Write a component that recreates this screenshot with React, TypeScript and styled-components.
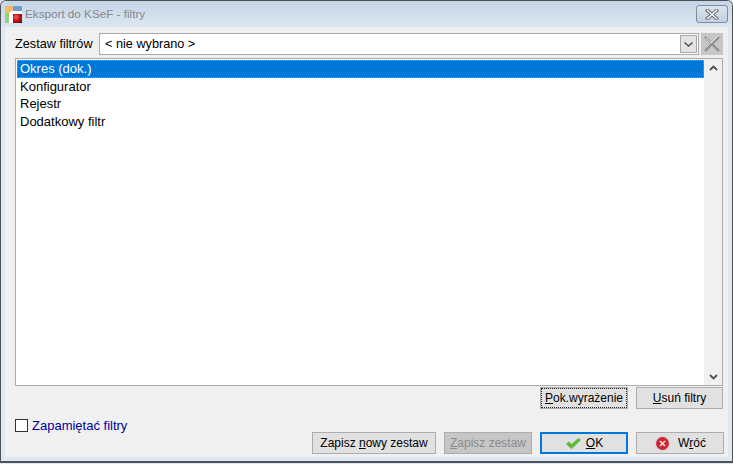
import * as React from "react"
import styled, { createGlobalStyle } from 'styled-components';

const GlobalStyle = createGlobalStyle`
  html, body {
    margin: 0;
    padding: 0;
    width: 733px;
    height: 464px;
    overflow: hidden;
    background: #dfe9f3;
  }
  * {
    box-sizing: border-box;
  }
`;

const items = ["Okres (dok.)", "Konfigurator", "Rejestr", "Dodatkowy filtr"];

const App = () => (
  <Dialog>
    <GlobalStyle />
    <TitleBar>
      <AppIcon width="17" height="17" viewBox="0 0 17 17">
        <defs>
          <radialGradient id="redSquare" cx="0.35" cy="0.35" r="0.8">
            <stop offset="0" stopColor="#f0605a" />
            <stop offset="0.5" stopColor="#c8141a" />
            <stop offset="1" stopColor="#5a0a0c" />
          </radialGradient>
        </defs>
        <rect x="0" y="0" width="8" height="7" fill="#f5b968" />
        <rect x="8" y="0" width="9" height="5" fill="#6a9fd2" />
        <rect x="0" y="7" width="4" height="10" fill="#9ad07c" />
        <path d="M4 17 V9 Q4 5 8 5 H17 V17 Z" fill="#fff" />
        <rect x="8" y="8" width="9" height="9" fill="url(#redSquare)" />
      </AppIcon>
      <WindowTitle>Eksport do KSeF - filtry</WindowTitle>
      <CloseButton>
        <svg width="14" height="11" viewBox="0 0 14 11">
          <path d="M2.5 1.5 L11.5 9.5 M11.5 1.5 L2.5 9.5" stroke="#59626e" strokeWidth="3.4" strokeLinecap="square" />
          <path d="M2.5 1.5 L11.5 9.5 M11.5 1.5 L2.5 9.5" stroke="#f4f6f8" strokeWidth="1.6" strokeLinecap="square" />
        </svg>
      </CloseButton>
    </TitleBar>
    <Body>
      <FilterRow>
        <FilterLabel>Zestaw filtrów</FilterLabel>
        <Combo>
          <ComboText>&lt; nie wybrano &gt;</ComboText>
          <ComboArrow>
            <svg width="11" height="7" viewBox="0 0 11 7">
              <path d="M1.5 1.5 L5.5 5 L9.5 1.5" fill="none" stroke="#4a5058" strokeWidth="1.4" />
            </svg>
          </ComboArrow>
        </Combo>
        <ClearButton>
          <svg width="20" height="20" viewBox="0 0 20 20">
            <path d="M3 3 L17 17 M17 3 L3 17" stroke="#8f8f8f" strokeWidth="2.4" />
            <path d="M9 9 L16 2 M4 4 L9 9" stroke="#efefef" strokeWidth="1" />
          </svg>
        </ClearButton>
      </FilterRow>
      <ListBox>
        <ListRows>
          {items.map((item, i) => (
            <ListRow key={item} $selected={i === 0}>{item}</ListRow>
          ))}
        </ListRows>
        <ScrollBar>
          <ScrollArrow>
            <svg width="9" height="6" viewBox="0 0 9 6">
              <path d="M1 5 L4.5 1.5 L8 5" fill="none" stroke="#505050" strokeWidth="1.8" />
            </svg>
          </ScrollArrow>
          <ScrollArrow>
            <svg width="9" height="6" viewBox="0 0 9 6">
              <path d="M1 1 L4.5 4.5 L8 1" fill="none" stroke="#505050" strokeWidth="1.8" />
            </svg>
          </ScrollArrow>
        </ScrollBar>
      </ListBox>
      <ListActions>
        <Button $width={88} $dotted><span><u>P</u>ok.wyrażenie</span></Button>
        <Button $width={87}><span><u>U</u>suń filtry</span></Button>
      </ListActions>
      <Footer>
        <Remember>
          <CheckBox />
          <RememberLabel>Zapamiętać filtry</RememberLabel>
        </Remember>
        <FooterButtons>
          <Button $width={124}><span>Zapisz <u>n</u>owy zestaw</span></Button>
          <Button $width={88} $disabled><span><u>Z</u>apisz zestaw</span></Button>
          <Button $width={88} $primary $gap={4}>
            <svg width="17" height="13" viewBox="0 0 17 13">
              <path d="M1 7 L4 4.5 L6.5 7 L13.5 1 L16 3 L6.5 12 Z" fill="#5fb83c" stroke="#a5c99c" strokeWidth="0.7" />
            </svg>
            <span><u>O</u>K</span>
          </Button>
          <Button $width={88} $gap={7}>
            <svg width="17" height="17" viewBox="0 0 17 17">
              <circle cx="8.5" cy="8.5" r="8" fill="#d6d6d6" />
              <circle cx="8.5" cy="8.5" r="6.4" fill="#cb252c" />
              <path d="M6 6 L11 11 M11 6 L6 11" stroke="#f3dada" strokeWidth="1.7" />
            </svg>
            <span>W<u>r</u>óć</span>
          </Button>
        </FooterButtons>
      </Footer>
    </Body>
  </Dialog>
)

export default App

const Dialog = styled.div`
  width: 733px;
  height: 463px;
  display: flex;
  flex-direction: column;
  border: 1px solid #4d5257;
  border-bottom-width: 2px;
  border-radius: 6px 6px 0 0;
  background: #dfe9f3;
  font-family: "Liberation Sans", Arial, sans-serif;
  font-size: 12.7px;
  color: #000;
`;

const TitleBar = styled.div`
  height: 25px;
  flex-shrink: 0;
  display: flex;
  align-items: center;
  padding: 0 4px 0 4px;
  background: linear-gradient(#c6d5e5, #d9e5f1);
  border-radius: 5px 5px 0 0;
`;

const AppIcon = styled.svg`
  flex-shrink: 0;
  margin-top: 2px;
`;

const WindowTitle = styled.div`
  flex: 1;
  margin-left: 3px;
  font-size: 11.7px;
  color: #85898f;
`;

const CloseButton = styled.div`
  width: 32px;
  height: 18px;
  margin-top: 1px;
  display: flex;
  align-items: center;
  justify-content: center;
  border: 1px solid #7f8ba0;
  border-radius: 3px;
  background: linear-gradient(#dbe3ec, #c4d0de);
`;

const Body = styled.div`
  flex: 1;
  margin: 0 3px 3px 3px;
  padding: 6px 4px 0 10px;
  background: #f0f0f0;
  border: 1px solid #dde6ef;
  display: flex;
  flex-direction: column;
`;

const FilterRow = styled.div`
  height: 22px;
  display: flex;
  align-items: center;
`;

const FilterLabel = styled.div`
  width: 84px;
  flex-shrink: 0;
`;

const Combo = styled.div`
  width: 600px;
  height: 22px;
  flex-shrink: 0;
  display: flex;
  align-items: center;
  justify-content: space-between;
  padding-right: 1px;
  background: #fff;
  border: 1px solid #ababab;
`;

const ComboText = styled.div`
  padding-left: 5px;
`;

const ComboArrow = styled.div`
  width: 17px;
  height: 18px;
  display: flex;
  align-items: center;
  justify-content: center;
  background: #e3e3e3;
  border: 1px solid #a8a8a8;
`;

const ClearButton = styled.div`
  width: 22px;
  height: 22px;
  margin-left: 2px;
  flex-shrink: 0;
  display: flex;
  align-items: center;
  justify-content: center;
  background: #c6c6c6;
`;

const ListBox = styled.div`
  width: 708px;
  height: 328px;
  margin-top: 3px;
  display: flex;
  background: #fff;
  border: 1px solid #ababab;
`;

const ListRows = styled.div`
  flex: 1;
  padding: 1px 0 0 1px;
`;

const ListRow = styled.div<{ $selected?: boolean }>`
  height: 17.67px;
  line-height: 17.67px;
  padding-left: 3px;
  font-size: 13px;
  color: ${p => (p.$selected ? '#fff' : '#000')};
  background: ${p => (p.$selected ? '#0078d7' : 'transparent')};
  outline: ${p => (p.$selected ? '1px dotted #e8862e' : 'none')};
  outline-offset: -1px;
`;

const ScrollBar = styled.div`
  width: 18px;
  display: flex;
  flex-direction: column;
  justify-content: space-between;
  background: #f0f0f0;
`;

const ScrollArrow = styled.div`
  height: 17px;
  display: flex;
  align-items: center;
  justify-content: center;
`;

const ListActions = styled.div`
  width: 708px;
  margin-top: 1px;
  display: flex;
  justify-content: flex-end;
  gap: 8px;
`;

const Button = styled.div<{ $width: number; $primary?: boolean; $disabled?: boolean; $dotted?: boolean; $gap?: number }>`
  width: ${p => p.$width}px;
  height: 22px;
  display: flex;
  align-items: center;
  justify-content: center;
  gap: ${p => p.$gap ?? 6}px;
  white-space: nowrap;
  font-size: 12px;
  color: ${p => (p.$disabled ? '#8c8c8c' : '#000')};
  background: ${p => (p.$disabled ? '#c6c6c6' : '#e1e1e1')};
  border: ${p => (p.$primary ? '2px solid #0078d7' : '1px solid #adadad')};
  outline: ${p => (p.$dotted ? '1px dotted #222' : 'none')};
  outline-offset: -2px;
`;

const Footer = styled.div`
  flex: 1;
  display: flex;
  justify-content: space-between;
  align-items: flex-start;
`;

const Remember = styled.div`
  margin-top: 9px;
  display: flex;
  align-items: center;
  gap: 4px;
`;

const CheckBox = styled.div`
  width: 13px;
  height: 13px;
  background: #fff;
  border: 1px solid #333;
`;

const RememberLabel = styled.div`
  font-size: 13px;
  color: #000099;
`;

const FooterButtons = styled.div`
  margin-top: 23px;
  display: flex;
  gap: 8px;
`;
